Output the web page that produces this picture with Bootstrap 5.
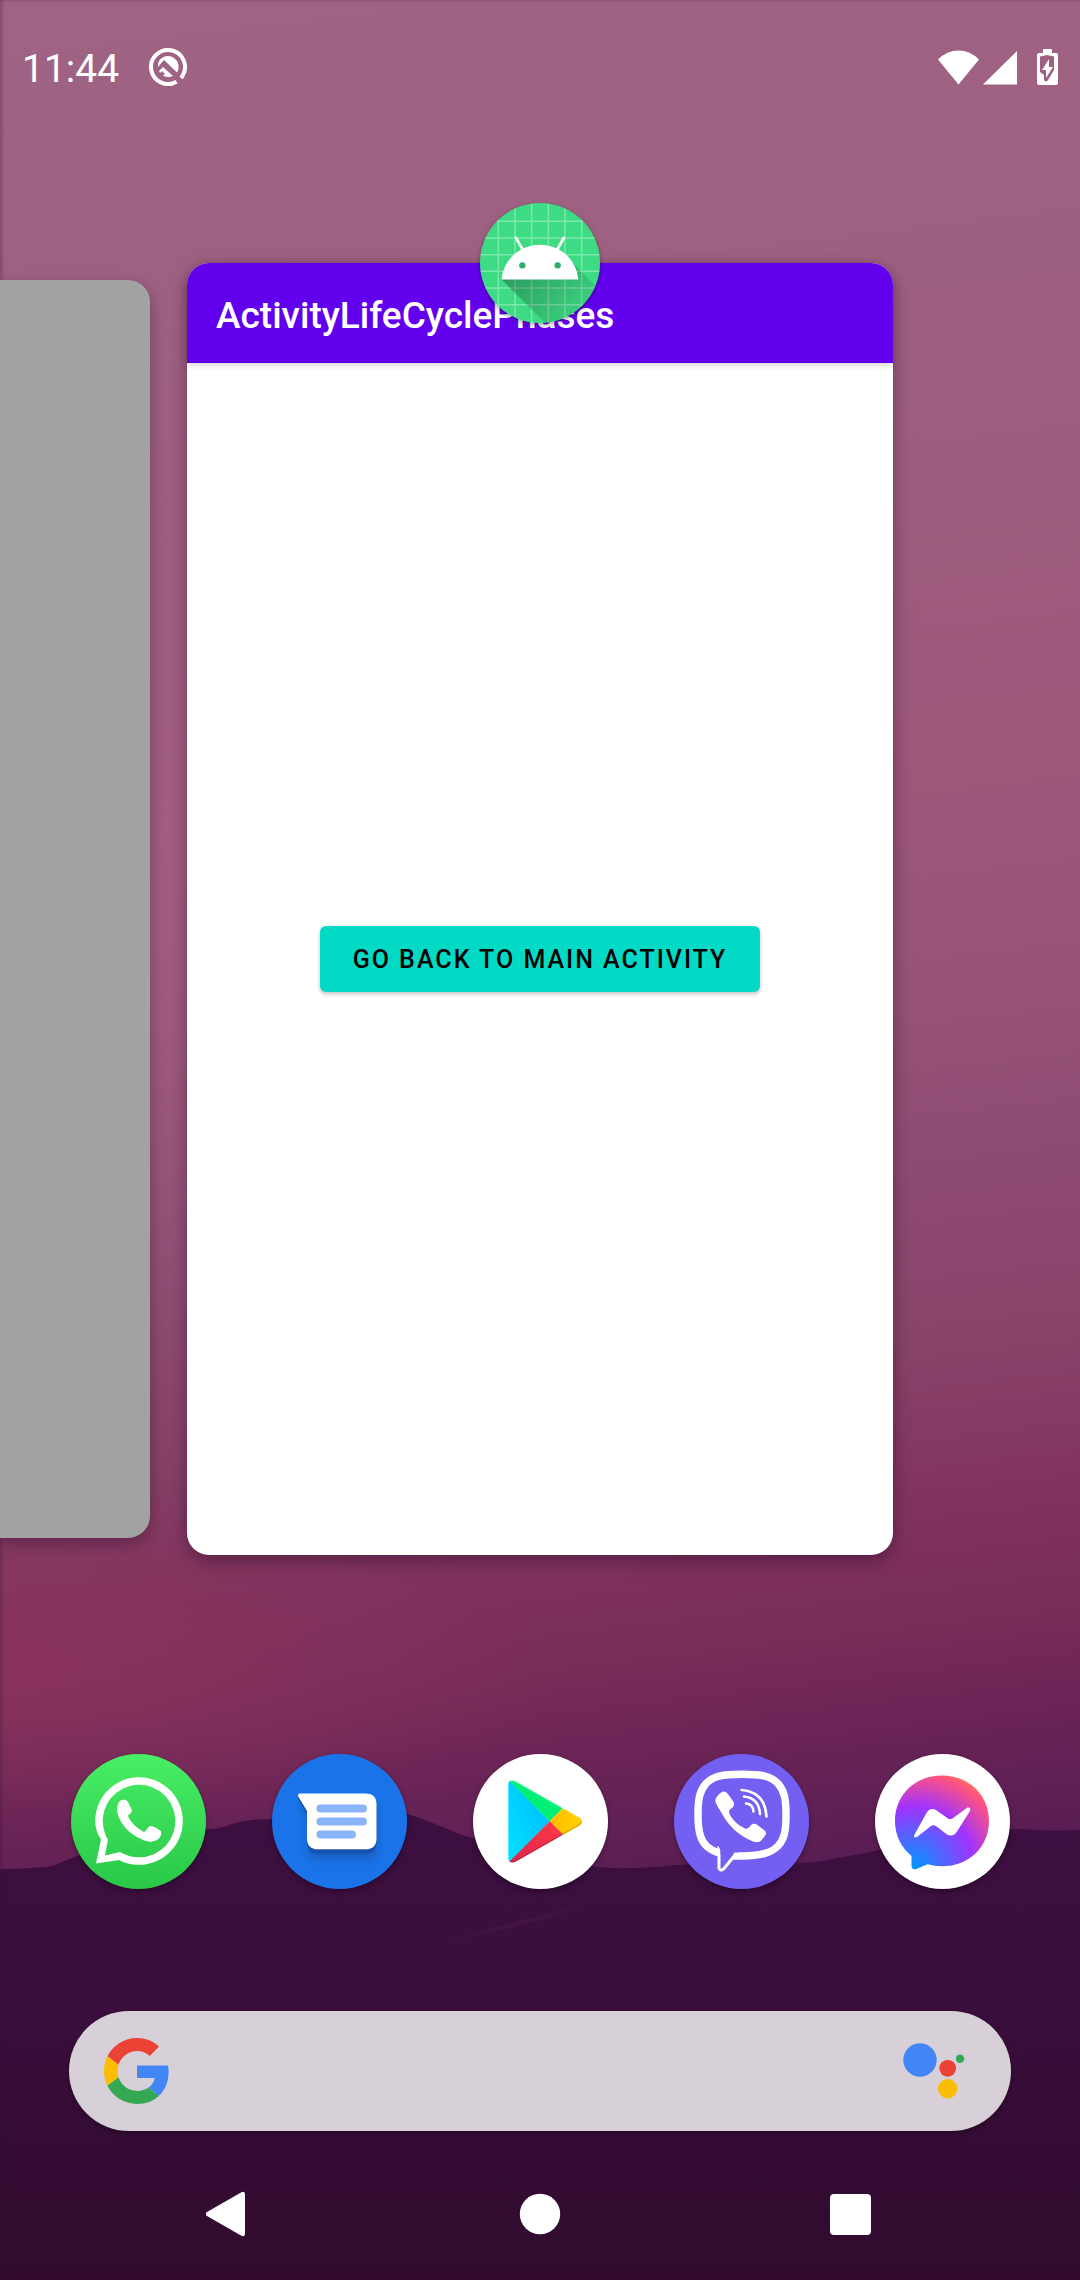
<!DOCTYPE html>
<html lang="en">
<head>
<meta charset="utf-8">
<meta name="viewport" content="width=device-width, initial-scale=1">
<title>Recent apps</title>
<link href="https://cdn.jsdelivr.net/npm/bootstrap@5.3.0/dist/css/bootstrap.min.css" rel="stylesheet">
<style>
  body { font-family: Roboto, "Liberation Sans", sans-serif; background: #3a0e3c; }
  svg { display: block; }
  .wallpaper { z-index: -1; }
  .status-bar { height: 134px; padding: 0 21px 0 22px; }
  .clock { font-size: 39px; line-height: 48px; padding-top: 4px; }
  .recents { padding-top: 129px; gap: 37px; }
  .task-prev { width: 150px; margin: 17px 0; background: #a2a2a2; border-radius: 0 22px 22px 0; box-shadow: 0 6px 16px rgba(30,0,30,.35); }
  .task-card { margin-right: 187px; border-radius: 22px; box-shadow: 0 6px 18px rgba(30,0,30,.4); }
  .task-icon { width: 120px; height: 120px; border-radius: 50%; overflow: hidden; box-shadow: 0 2px 5px rgba(0,0,0,.35); }
  .app-bar { height: 100px; padding: 6px 29px 0; background: #6200ee; border-radius: 22px 22px 0 0; box-shadow: 0 2px 7px rgba(0,0,0,.18); }
  .app-title { font-size: 37px; line-height: 44px; font-weight: 500; }
  .btn-teal { width: 440px; height: 66px; padding: 2px 0 0; border: 0; border-radius: 6px; font-size: 25px; font-weight: 500; letter-spacing: 2px; color: #000; background: #03dac5; box-shadow: 0 2px 4px rgba(0,0,0,.25); }
  .btn-teal:hover { color: #000; background: #03c9b6; }
  .dock { margin-top: 199px; padding: 0 70px 0 71px; }
  .dock-app { width: 135px; height: 135px; border-radius: 50%; box-shadow: 0 2px 5px rgba(0,0,0,.35); }
  .search-pill { height: 120px; margin: 122px 69px 0; padding: 0 46px 0 35px; background: #d8d0d8; box-shadow: 0 2px 5px rgba(0,0,0,.3); }
  .search-pill input { font-size: 36px; box-shadow: none; }
  .nav-keys { height: 149px; padding: 17px 72px 0; }
</style>
</head>
<body>
<div class="position-relative z-0 d-flex flex-column min-vh-100 overflow-hidden">

  <svg class="wallpaper position-absolute top-0 start-0 w-100 h-100" viewBox="0 0 1080 2280" preserveAspectRatio="none" aria-hidden="true">
    <defs>
      <linearGradient id="sky" gradientUnits="userSpaceOnUse" x1="0" y1="0" x2="230" y2="1940">
        <stop offset="0" stop-color="#9f6384"/>
        <stop offset=".2" stop-color="#9e6081"/>
        <stop offset=".44" stop-color="#9d587a"/>
        <stop offset=".54" stop-color="#985478"/>
        <stop offset=".65" stop-color="#8e4b72"/>
        <stop offset=".74" stop-color="#884369"/>
        <stop offset=".82" stop-color="#81335e"/>
        <stop offset=".88" stop-color="#782c59"/>
        <stop offset=".94" stop-color="#682356"/>
        <stop offset="1" stop-color="#571d53"/>
      </linearGradient>
      <radialGradient id="glow" gradientUnits="userSpaceOnUse" cx="0" cy="0" r="1" gradientTransform="translate(0 1670) scale(560 150)">
        <stop offset="0" stop-color="#90355d" stop-opacity=".7"/>
        <stop offset="1" stop-color="#90355d" stop-opacity="0"/>
      </radialGradient>
      <radialGradient id="haze" gradientUnits="userSpaceOnUse" cx="0" cy="0" r="1" gradientTransform="translate(150 850) scale(380 560)">
        <stop offset="0" stop-color="#a66386" stop-opacity=".6"/>
        <stop offset="1" stop-color="#a66386" stop-opacity="0"/>
      </radialGradient>
      <linearGradient id="hill" x1="0" y1="0" x2="0" y2="1">
        <stop offset="0" stop-color="#3c0f40"/>
        <stop offset=".4" stop-color="#3a0e3d"/>
        <stop offset=".75" stop-color="#340c33"/>
        <stop offset="1" stop-color="#320b2f"/>
      </linearGradient>
      <linearGradient id="edge"><stop offset="0" stop-color="#301030" stop-opacity=".25"/><stop offset="1" stop-color="#301030" stop-opacity="0"/></linearGradient>
      <linearGradient id="streak"><stop offset="0" stop-color="#5a2058" stop-opacity="0"/><stop offset=".5" stop-color="#5a2058" stop-opacity=".35"/><stop offset="1" stop-color="#5a2058" stop-opacity="0"/></linearGradient>
    </defs>
    <path fill="url(#sky)" d="M0 0h1080v2280H0z"/>
    <path fill="url(#haze)" d="M0 0h1080v1900H0z"/>
    <path fill="url(#glow)" d="M0 1400h600v500H0z"/>
    <path fill="url(#hill)" d="M0 1869C20 1869 38 1868 52 1866Q66 1860 80 1855C120 1842 160 1832 206 1829C222 1830 232 1822 246 1821C260 1818 280 1820 300 1817Q350 1800 407 1814C440 1824 455 1834 473 1838C520 1852 570 1867 612 1868Q640 1869 674 1865C740 1862 780 1866 815 1862Q850 1856 880 1850C930 1838 980 1829 1020 1829Q1050 1832 1080 1830V2280H0z"/>
    <path fill="url(#streak)" d="M438 1942Q530 1928 592 1902Q520 1921 438 1942z"/>
    <path fill="url(#edge)" d="M0 0h5v2280H0z"/>
    <path fill="#301030" opacity=".12" d="M0 0h1080v2H0z"/>
  </svg>

  <header class="status-bar d-flex align-items-center justify-content-between text-white">
    <div class="d-flex align-items-center">
      <span class="clock">11:44</span>
      <svg class="ms-4" width="50" height="40" viewBox="-25 -20 50 40" fill="none" aria-label="Debug notification">
        <path stroke="#fff" stroke-width="4" d="M8.500 14.700A17 17 0 1 1 14.700 8.500"/>
        <path stroke="#fff" stroke-width="4" d="M14.700 8.500A17 17 0 0 1 13 11"/>
        <path fill="#fff" d="M-9-6A10.500 10.500 0 0 1 9 5.500L-4-7L-10 0A10 10 0 0 1-9-6z"/>
        <path fill="#fff" d="M-9 4L-5 0L5 9A10.500 10.500 0 0 1-5 8.500L-3 7L-6 4L-8 6z"/>
      </svg>
    </div>
    <div class="d-flex align-items-center">
      <svg width="41" height="35" viewBox="0 0 41 35" fill="#fff" aria-label="Wi-Fi"><path d="M0 9.500Q9 .5 20.500 .5T41 9.500L20.500 34.500z"/></svg>
      <svg class="ms-1" width="35" height="35" viewBox="0 0 35 35" fill="#fff" aria-label="Mobile signal"><path d="M34 1v33.500H0z"/></svg>
      <svg class="ms-3" width="25" height="36" viewBox="-3 0 25 36" aria-label="Battery charging">
        <path fill="#fff" d="M6 0h9v4h4q2 0 2 2v28q0 2-2 2H2q-2 0-2-2V6q0-2 2-2h4z"/>
        <path fill="#9d6082" d="M10 6L17 7.500V21L11 31Q9 34 7 31V26L3 23V7.500z"/>
        <path fill="#fff" d="M12 10v8h4L9 29v-8H5z"/>
      </svg>
    </div>
  </header>

  <main class="recents d-flex flex-grow-1 align-items-stretch">
    <article class="task-prev flex-shrink-0" aria-label="Previous app"></article>
    <article class="task-card position-relative flex-grow-1 d-flex flex-column bg-white">
      <div class="app-bar d-flex align-items-center text-white">
        <h1 class="app-title m-0">ActivityLifeCyclePhases</h1>
      </div>
      <div class="flex-grow-1 d-flex align-items-center justify-content-center">
        <button type="button" class="btn btn-teal text-uppercase text-nowrap">Go back to main activity</button>
      </div>
      <div class="task-icon position-absolute top-0 start-50 translate-middle">
        <svg width="120" height="120" viewBox="18 18 72 72" aria-hidden="true">
          <defs><linearGradient id="droidShade" gradientUnits="userSpaceOnUse" x1="42.900" y1="49.600" x2="85.800" y2="92.500"><stop offset="0" stop-color="#000" stop-opacity=".3"/><stop offset="1" stop-color="#000" stop-opacity="0"/></linearGradient></defs>
          <path fill="#3ddc84" d="M18 18h72v72H18z"/>
          <path stroke="#fff" stroke-opacity=".33" stroke-width=".9" d="M29 18v72M39 18v72M49 18v72M59 18v72M69 18v72M79 18v72M18 29h72M18 39h72M18 49h72M18 59h72M18 69h72M18 79h72"/>
          <path fill="url(#droidShade)" d="M31 63.928c0 0 6.400-11 12.100-13.100c7.200-2.600 26-1.400 26-1.400l38.100 38.100L107 108.928l-32-1L31 63.928z"/>
          <path fill="#fff" d="M65.300 45.828l3.800-6.600c.2-.4.1-.9-.3-1.100c-.4-.2-.9-.1-1.100.3l-3.900 6.700c-6.300-2.800-13.400-2.800-19.700 0l-3.900-6.700c-.2-.4-.7-.5-1.100-.3C38.800 38.328 38.700 38.828 38.900 39.228l3.800 6.600C36.200 49.428 31.700 56.028 31 63.928h46C76.300 56.028 71.800 49.428 65.300 45.828z"/>
          <circle cx="43.400" cy="55.400" r="1.900" fill="#2fae6b"/><circle cx="64.600" cy="55.400" r="1.900" fill="#2fae6b"/>
        </svg>
      </div>
    </article>
  </main>

  <nav class="dock d-flex justify-content-between" aria-label="Favourite apps">
    <a href="#" class="dock-app" aria-label="WhatsApp">
      <svg width="135" height="135" viewBox="0 0 135 135">
        <defs><linearGradient id="waBg" x1="0" y1="0" x2="0" y2="1"><stop offset="0" stop-color="#48ee65"/><stop offset="1" stop-color="#2ac748"/></linearGradient></defs>
        <circle cx="67.500" cy="67.500" r="67.500" fill="url(#waBg)"/>
        <path fill="#fff" fill-rule="evenodd" d="M30 85.500Q24.200 77 24.200 67A43.800 43.800 0 1 1 48 106L25 109.600zM37 85.400L34 101.500L49 98Q58 103.300 68 103.300A36.300 36.300 0 1 0 34 79.500Q35 83 37 85.400z"/>
        <path fill="#fff" d="M47 50C48 46 52 45 55 46C58 48 59 53 61 56C61 59 58 60 57 62C60 69 66 74 73 78C75 77 77 73 79 72C83 72 87 75 90 77C91 82 88 86 83 87C78 89 72 86 66 83C57 78 50 70 47 61C45.500 57 46 53 47 50z"/>
      </svg>
    </a>
    <a href="#" class="dock-app" aria-label="Messages">
      <svg width="135" height="135" viewBox="0 0 135 135">
        <defs><filter id="soft" x="-30%" y="-30%" width="160%" height="170%"><feGaussianBlur stdDeviation="5"/></filter></defs>
        <circle cx="67.500" cy="67.500" r="67.500" fill="#1a73e8"/>
        <path fill="#123f85" opacity=".45" filter="url(#soft)" d="M28 50H104V104H37V66z"/>
        <path fill="#1752b0" d="M26 40V45L35 61V88.500Q35 99.500 46 99.500H93.500Q104.500 99.500 104.500 88.500V50z"/>
        <path fill="#fff" d="M28 39.500H93.500Q104.500 39.500 104.500 50.500V84.500Q104.500 95.300 93.500 95.300H46Q35 95.300 35 84.500V57L26.200 42.500Q25.500 39.500 28 39.500z"/>
        <path stroke="#8ab4f8" stroke-width="8" stroke-linecap="round" d="M48.500 54.500H91M48.500 67.500H91M48.500 80.500H80"/>
      </svg>
    </a>
    <a href="#" class="dock-app" aria-label="Play Store">
      <svg width="135" height="135" viewBox="0 0 135 135">
        <defs>
          <linearGradient id="plB" x1="1" y1="0" x2="0" y2=".8"><stop offset="0" stop-color="#00b8ff"/><stop offset="1" stop-color="#00e2ff"/></linearGradient>
          <linearGradient id="plR" x1="1" y1="0" x2="0" y2="1"><stop offset="0" stop-color="#ff3a44"/><stop offset="1" stop-color="#d8224f"/></linearGradient>
          <linearGradient id="plY" x1="1" y1="0" x2="0" y2="0"><stop offset="0" stop-color="#ffd800"/><stop offset="1" stop-color="#ffbc00"/></linearGradient>
          <clipPath id="plClip"><path d="M35.300 29.500Q36 25.500 42 27L106.500 63.500Q111.500 67.300 106.500 71.500L42 108Q36 109.500 35.300 105z"/></clipPath>
        </defs>
        <circle cx="67.500" cy="67.500" r="67.500" fill="#fff"/>
        <g clip-path="url(#plClip)">
          <path fill="url(#plB)" d="M30 20L76.700 67.300L30 115z"/>
          <path fill="#00f076" d="M30 20.600L76.700 67.300L90 54L42 20z"/>
          <path fill="url(#plY)" d="M76.700 67.300L90 54L120 60V75L90 81z"/>
          <path fill="url(#plR)" d="M76.700 67.300L90 80.600L42 114L34 110z"/>
          <path fill="none" stroke="#000" stroke-opacity=".18" stroke-width="2.500" d="M37 108.500H41L106.500 71.500L109 68"/>
          <path fill="none" stroke="#fff" stroke-opacity=".3" stroke-width="2" d="M38 26.500H41L106.500 63.500"/>
        </g>
      </svg>
    </a>
    <a href="#" class="dock-app" aria-label="Viber">
      <svg width="135" height="135" viewBox="0 0 135 135">
        <circle cx="67.500" cy="67.500" r="67.500" fill="#7360f2"/>
        <path fill="none" stroke="#fff" stroke-width="7.400" d="M68 20.300C88 20.300 97 22 104 29.500C110.500 37 112 45 112 61C112 77 110.500 85 104 92C97 99 88 101.500 68 102H58L45 99C36 96 29 91 26.500 82C24.500 76 24 70 24 61C24 45 25.500 37 32 29.500C39 22 48 20.300 68 20.300z"/>
        <path fill="#7360f2" stroke="#fff" stroke-width="3" stroke-linejoin="round" d="M45 92V114Q46.500 118 50 114.500L61 101V92"/>
        <path fill="#7360f2" d="M43 90H64V98.500H60.500L58 101.500L52 100H46.500V96z"/>
        <path fill="#fff" d="M42 44Q45 39 49 37.500Q52 37 54 40L59 47Q61 50 59 53L55.500 56Q54.500 58 56 61Q61 70 71 74.500Q73 75 75 73.500L77 71Q79 69 82 70L90 76Q93 78 91.500 81Q89 85 86 87.500Q83 89 79 87.500Q58 79 47 58Q43 52 41.500 48Q41 46 42 44z"/>
        <path fill="none" stroke="#fff" stroke-width="2.600" stroke-linecap="round" d="M67.500 36Q91 38 92.500 62.500M70 42.500Q85 44 86 60M72 49.500Q79 50 79.500 57.500"/>
      </svg>
    </a>
    <a href="#" class="dock-app" aria-label="Messenger">
      <svg width="135" height="135" viewBox="0 0 135 135">
        <defs><radialGradient id="msBg" gradientUnits="userSpaceOnUse" cx="38" cy="114" r="102"><stop offset="0" stop-color="#0099ff"/><stop offset=".6" stop-color="#a033ff"/><stop offset=".93" stop-color="#ff5280"/><stop offset="1" stop-color="#ff7061"/></radialGradient></defs>
        <circle cx="67.500" cy="67.500" r="67.500" fill="#fff"/>
        <path fill="url(#msBg)" d="M67 21.500C94 21.500 114 41 114 67C114 93 94 112.300 67 112.300Q60 112.300 52.500 110.300L42 114.700Q37 116.500 36.500 112V102Q20 88 20 67C20 41 40 21.500 67 21.500z"/>
        <path fill="#fff" d="M39.300 81L51.500 59Q55 53 61 56L73 64.500Q75 66 77.500 64.500L92.500 53.500Q96 53 95.200 56.500L82 77.500Q78 83.500 72 80.500L61 72Q58.500 70.500 56 72L42 83Q38 84.500 39.300 81z"/>
      </svg>
    </a>
  </nav>

  <form class="search-pill d-flex align-items-center rounded-pill" role="search">
    <label for="q" class="flex-shrink-0" aria-label="Search">
      <svg width="66" height="66" viewBox="0 0 48 48" aria-hidden="true">
        <path fill="#ea4335" d="M24 9.500c3.540 0 6.710 1.220 9.210 3.600l6.850-6.850C35.900 2.380 30.470 0 24 0 14.620 0 6.510 5.380 2.560 13.220l7.980 6.190C12.430 13.720 17.740 9.500 24 9.500z"/>
        <path fill="#4285f4" d="M46.980 24.550c0-1.570-.15-3.090-.38-4.550H24v9.020h12.940c-.58 2.960-2.260 5.480-4.780 7.180l7.730 6c4.510-4.180 7.090-10.360 7.090-17.650z"/>
        <path fill="#fbbc05" d="M10.530 28.590c-.48-1.450-.76-2.990-.76-4.590s.27-3.140.76-4.590l-7.980-6.190C.92 16.460 0 20.120 0 24c0 3.880.92 7.540 2.560 10.780l7.970-6.190z"/>
        <path fill="#34a853" d="M24 48c6.480 0 11.930-2.130 15.890-5.810l-7.730-6c-2.150 1.450-4.920 2.300-8.160 2.300-6.260 0-11.570-4.220-13.470-9.910l-7.980 6.190C6.510 42.620 14.620 48 24 48z"/>
      </svg>
    </label>
    <input id="q" type="search" aria-label="Search" class="form-control flex-grow-1 bg-transparent border-0 mx-3">
    <button type="button" class="btn border-0 p-0 flex-shrink-0" aria-label="Voice assistant">
      <svg width="62" height="56" viewBox="0 0 62 56"><circle cx="17" cy="17" r="16.700" fill="#4285f4"/><circle cx="44.700" cy="25.300" r="8.400" fill="#ea4335"/><circle cx="44.700" cy="45.700" r="9.700" fill="#fbbc04"/><circle cx="57" cy="15.700" r="4.200" fill="#34a853"/></svg>
    </button>
  </form>

  <nav class="nav-keys d-flex align-items-center" aria-label="System navigation">
    <button type="button" class="btn border-0 p-0 flex-fill d-flex justify-content-center" aria-label="Back">
      <svg width="44" height="46" viewBox="0 0 44 46" fill="#fff"><path d="M1 21L35 1.500Q39 -.5 39 3.500V42.500Q39 46.500 35 44.500L1 25Q-1.500 23 1 21z"/></svg>
    </button>
    <button type="button" class="btn border-0 p-0 flex-fill d-flex justify-content-center" aria-label="Home">
      <svg width="44" height="44" viewBox="0 0 44 44" fill="#fff"><circle cx="22" cy="22" r="20.200"/></svg>
    </button>
    <button type="button" class="btn border-0 p-0 flex-fill d-flex justify-content-center" aria-label="Recent apps">
      <svg width="44" height="44" viewBox="0 0 44 44" fill="#fff"><rect width="41" height="41" y="2" rx="4"/></svg>
    </button>
  </nav>
</div>
<script src="https://cdn.jsdelivr.net/npm/bootstrap@5.3.0/dist/js/bootstrap.bundle.min.js"></script>
</body>
</html>
